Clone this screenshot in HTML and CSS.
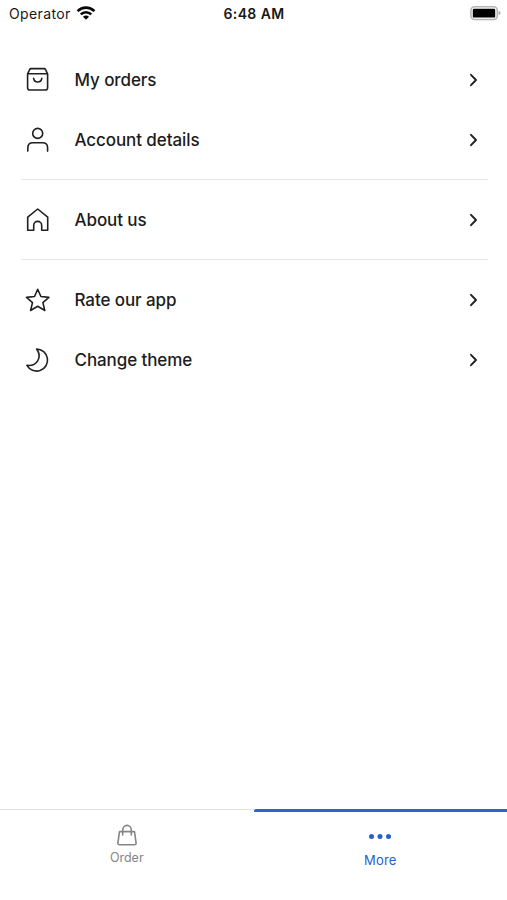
FILE: index.html
```html
<!DOCTYPE html>
<html lang="en">
<head>
<meta charset="utf-8">
<title>More</title>
<link rel="stylesheet" href="styles.css">
</head>
<body>
<div class="screen">
  <header class="status">
    <div class="carrier"><span class="operator">Operator</span>
      <svg class="wifi" width="20" height="16" viewBox="0 0 20 16"><g fill="none" stroke="#080808" stroke-width="2.7"><path d="M1.6 6.1a12 12 0 0 1 16.8 0"/><path d="M4.8 9.4a7.4 7.4 0 0 1 10.4 0"/></g><path d="M7 11.7a4.2 4.2 0 0 1 6 0L10 14.8z" fill="#080808"/></svg>
    </div>
    <div class="time">6:48 AM</div>
    <div class="power">
      <svg width="31" height="16" viewBox="0 0 31 16"><rect x=".9" y="1.7" width="26.4" height="12.8" rx="3.8" fill="#fff" stroke="#b5b5b5" stroke-width="1.6"/><rect x="2.8" y="3.8" width="22.4" height="8.8" rx="1.2" fill="#000"/><path d="M28.6 6.1q2 .6 2 2t-2 2z" fill="#aaa"/></svg>
    </div>
  </header>
  <main class="menu">
    <section class="group">
      <a class="row"><svg class="icon" viewBox="0 0 28 28"><path d="M3.6 7.8 5.7 3.5Q6.2 2.6 7.2 2.6H20q1 0 1.5.9l2.1 4.3v13.9q0 2.3-2.3 2.3H5.9q-2.3 0-2.3-2.3zH23.6M9.6 12.4c.6 4.7 7.6 4.7 8.2 0"/></svg><span class="label">My orders</span><svg class="chevron" viewBox="0 0 10 14"><path d="m2 1.8 5 5.2-5 5.2"/></svg></a>
      <a class="row"><svg class="icon" viewBox="0 0 28 28"><circle cx="13.7" cy="7.4" r="5"/><path d="M3.8 25.1v-3.3q0-5 5-5h9.8q5 0 5 5v3.3"/></svg><span class="label">Account details</span><svg class="chevron" viewBox="0 0 10 14"><path d="m2 1.8 5 5.2-5 5.2"/></svg></a>
    </section>
    <section class="group">
      <a class="row"><svg class="icon" viewBox="0 0 28 28"><path d="M13.7 3 3.7 11.2V24.2h6v-4.8a4 4 0 0 1 8 0v4.8h6V11.2z"/></svg><span class="label">About us</span><svg class="chevron" viewBox="0 0 10 14"><path d="m2 1.8 5 5.2-5 5.2"/></svg></a>
    </section>
    <section class="group">
      <a class="row"><svg class="icon" viewBox="0 0 28 28"><path d="m13.7 3.3 3.2 7.2 8 .9-6 5.2 1.9 7.9-7.1-4.2-7.1 4.2 1.9-7.9-6-5.2 8-.9z"/></svg><span class="label">Rate our app</span><svg class="chevron" viewBox="0 0 10 14"><path d="m2 1.8 5 5.2-5 5.2"/></svg></a>
      <a class="row"><svg class="icon" viewBox="0 0 28 28"><path d="M12.6 3.1A11 11 0 1 1 2.9 19.4C12.5 20.8 18.8 11.5 12.6 3.1z"/></svg><span class="label">Change theme</span><svg class="chevron" viewBox="0 0 10 14"><path d="m2 1.8 5 5.2-5 5.2"/></svg></a>
    </section>
  </main>
  <nav class="tabs">
    <a class="tab"><svg class="tab-icon" viewBox="0 0 24 24"><path d="M4.5 8.6h15l1.6 11.2q.2 2-1.8 2H4.7q-2 0-1.8-2zM7.7 12V7.2a4.3 4.8 0 0 1 8.6 0V12"/></svg><span class="tab-label">Order</span></a>
    <a class="tab active"><svg class="tab-icon dots" viewBox="0 0 24 24"><circle cx="3.5" cy="12.5" r="2.5"/><circle cx="12" cy="12.5" r="2.5"/><circle cx="20.5" cy="12.5" r="2.5"/></svg><span class="tab-label">More</span></a>
  </nav>
</div>
</body>
</html>
```
FILE: styles.css
```css
* { box-sizing: border-box; }
body { margin: 0; background: #fff; color: #1c1c1c; font-family: Inter, "Liberation Sans", sans-serif; }
.screen { height: 900px; display: flex; flex-direction: column; overflow: hidden; }
.status { height: 28px; padding: 0 6px 2px 9px; display: grid; grid-template-columns: 1fr auto 1fr; align-items: center; font-size: 14px; color: #181818; }
.carrier { display: flex; align-items: center; gap: 5px; }
.operator { letter-spacing: .38px; }
.wifi { display: block; margin-top: -1px; }
.time { font-weight: 600; letter-spacing: .4px; padding-right: 2px; }
.power { display: flex; justify-content: flex-end; margin-top: -1px; }
.menu { flex: 1; padding: 22px 19px 0 21px; }
.group + .group { border-top: 1px solid #e5e5e5; margin-top: 9px; padding-top: 10px; }
.row { height: 60px; padding: 0 9px 0 3px; display: flex; align-items: center; }
.icon { width: 28px; height: 28px; margin-right: 22.5px; fill: none; stroke: #202020; stroke-width: 1.6; stroke-linejoin: round; stroke-linecap: round; }
.label { flex: 1; font-size: 17px; font-weight: 500; letter-spacing: -.09px; }
.chevron { width: 10px; height: 14px; fill: none; stroke: #202020; stroke-width: 1.9; stroke-linecap: round; stroke-linejoin: round; }
.tabs { height: 91px; display: grid; grid-template-columns: 1fr 1fr; }
.tab { border-top: 1px solid #e2e2e2; padding-top: 13px; display: flex; flex-direction: column; align-items: center; color: #858585; }
.tab.active { border-top: 3px solid #2b66c8; border-radius: 2px 0 0 0; color: #2460cf; }
.tab-icon { width: 24px; height: 24px; fill: none; stroke: currentColor; stroke-width: 1.6; stroke-linejoin: round; stroke-linecap: round; }
.dots { fill: currentColor; stroke: none; margin-top: -1px; }
.tab-label { font-size: 12.5px; line-height: 16px; margin-top: 3px; }
.active .tab-label { font-size: 13px; margin-top: 4px; letter-spacing: .2px; }
```
